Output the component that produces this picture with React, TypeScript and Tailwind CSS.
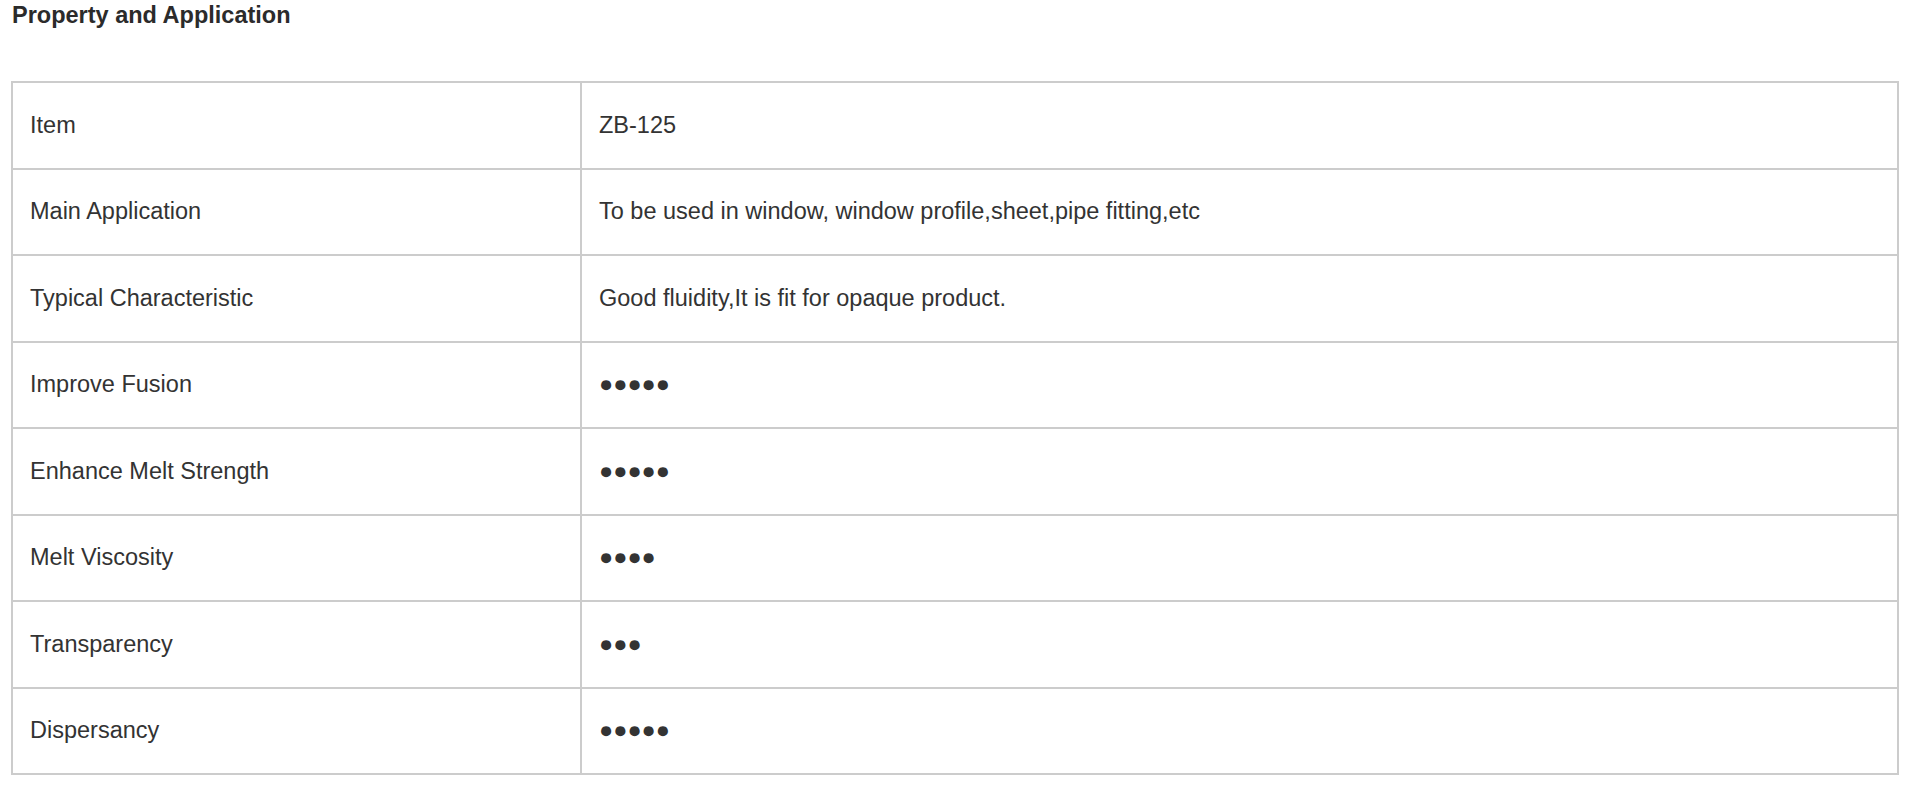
const rows: { label: string; value: string }[] = [
  { label: 'Item', value: 'ZB-125' },
  { label: 'Main Application', value: 'To be used in window, window profile,sheet,pipe fitting,etc' },
  { label: 'Typical Characteristic', value: 'Good fluidity,It is fit for opaque product.' },
  { label: 'Improve Fusion', value: '●●●●●' },
  { label: 'Enhance Melt Strength', value: '●●●●●' },
  { label: 'Melt Viscosity', value: '●●●●' },
  { label: 'Transparency', value: '●●●' },
  { label: 'Dispersancy', value: '●●●●●' },
];

const App = () => {
  return (
    <div className="w-[1920px] h-[787px] bg-white overflow-hidden font-['Liberation_Sans',Arial,sans-serif] text-[#333]">
      <div className="pl-[12px] pt-[2px] text-[23.5px] leading-[26px] font-bold text-[#2b2b2b]">
        Property and Application
      </div>
      <div className="mt-[53px] ml-[11px] w-[1888px] border-2 border-[#cccccc]">
        {rows.map((row, i) => (
          <div
            key={row.label}
            className={`grid grid-cols-[567px_1fr] ${i > 0 ? 'h-[86.5px] border-t-2 border-[#cccccc]' : 'h-[84.5px]'}`}
          >
            <div className="flex items-center pl-[17px] text-[23.5px]">{row.label}</div>
            <div className="flex items-center pl-[17px] text-[23.5px] border-l-2 border-[#cccccc]">{row.value}</div>
          </div>
        ))}
      </div>
    </div>
  );
};

export default App;
